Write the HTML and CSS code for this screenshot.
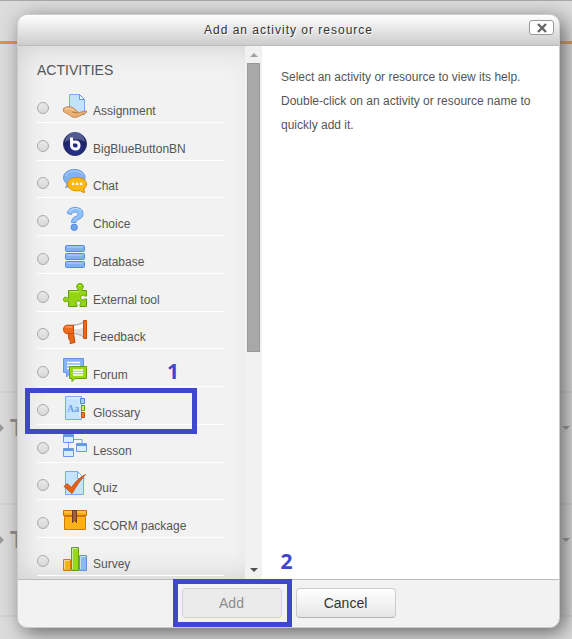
FILE: index.html
```html
<!DOCTYPE html>
<html lang="en">
<head>
<meta charset="utf-8">
<title>Add an activity or resource</title>
<link rel="stylesheet" href="styles.css">
</head>
<body>
<div class="page" aria-hidden="true">
  <div class="page-head"></div>
  <div class="page-gap"></div>
  <div class="topic"><span class="move"></span><span class="topic-name">T</span><span class="caret"></span></div>
  <div class="topic"><span class="move"></span><span class="topic-name">T</span><span class="caret"></span></div>
  <div class="topic"></div>
</div>

<form class="dialog" role="dialog" aria-labelledby="title">
  <header class="dialog-head">
    <h1 id="title">Add an activity or resource</h1>
    <button class="close" type="button" aria-label="Close"><svg width="10" height="10" viewBox="0 0 10 10"><path d="M1 1l8 8M9 1l-8 8" stroke="#666" stroke-width="2.4"/></svg></button>
  </header>
  <div class="dialog-body">
    <div class="chooser">
      <div class="options">
        <h2>ACTIVITIES</h2>
        <ul>
          <li><label><input type="radio" name="m">
            <svg viewBox="0 0 24 24"><path d="M6.500.500h10l5 5v15h-15z" fill="#c3e3fa" stroke="#7aabf3"/><path d="M16.500.500v5h5z" fill="#eef8ff" stroke="#6598e8"/><path d="M.500 14.500c3-2 6-2.500 9-1l4 3c2 1 1 2-1 2l-3-.500 4 1 9.500-2c2 0 1 1.500-.500 2l-8 4c-3 1-6 0-8-2l-6-3.500z" fill="#e9b277" stroke="#b9743b" stroke-width=".8"/><path d="M2 15.300c3-1.500 6-1 9 1.200" stroke="#ffdcae" fill="none"/></svg>
            <span>Assignment</span></label></li>
          <li><label><input type="radio" name="m">
            <svg viewBox="0 0 24 24"><defs><radialGradient id="bb" cx=".5" cy=".75"><stop stop-color="#26339a"/><stop offset="1" stop-color="#1d2465"/></radialGradient></defs><circle cx="12" cy="12" r="11.500" fill="url(#bb)" stroke="#30386d"/><path d="M2 10a10 10 0 0 1 20 0c-7-4-13-3-20 0z" fill="#7480ae" opacity=".6"/><path d="M8.500 5.500v8a3.500 3.500 0 0 0 3.500 3.500h1a3 3 0 0 0 3-3v-1a3 3 0 0 0-3-3H8.500" fill="none" stroke="#fff" stroke-width="2.900"/></svg>
            <span>BigBlueButtonBN</span></label></li>
          <li><label><input type="radio" name="m">
            <svg viewBox="0 0 24 24"><path d="M11.500.500c6 0 10.500 3.500 10.500 8s-4.500 8-10.500 8c-2 0-3 0-4.500-.700-1 1.500-2.500 2.500-4.500 2.700 1-1 1.500-2.500 1.300-4C1.700 13 .500 11 .500 8.500c0-4.500 5-8 11-8z" fill="#81b2f5" stroke="#6793dd"/><path d="M2.500 7c2-6 14-7 18-1" fill="none" stroke="#b5d5ff"/><path d="M14 8.500c5.500 0 9.500 2.800 9.500 6.500 0 2-1 3.500-2.500 4.700 0 1.500.200 2.800.700 3.800-2 0-3.500-1-4.500-2-1 .200-2 .300-3.200.300-5.500 0-9.500-3-9.500-6.800s4-6.500 9.500-6.500z" fill="#ffb90f" stroke="#dd880e"/><path d="M9 13.700h2.300v2.300H9zm4 0h2.300v2.300H13zm4 0h2.300v2.300H17z" fill="#fff"/></svg>
            <span>Chat</span></label></li>
          <li><label><input type="radio" name="m">
            <svg viewBox="0 0 24 24"><path d="M4.500 6.500C4.500 2.500 8 .500 12 .500c5 0 8 2.500 8 6s-2 5-4.500 6c-1.500.700-2 1.500-2.500 3H8.500c0-3 1.500-5 4-6 1.700-.700 2.500-1.200 2.500-2.500 0-1-1-2-3-2s-3 1-3.500 2.500z" fill="#8fc1fb" stroke="#6397e7"/><path d="M6 5c2-4 9-5 12-1" fill="none" stroke="#c3e1ff"/><circle cx="11.200" cy="20.300" r="3.200" fill="#6da4f0" stroke="#568ce0"/></svg>
            <span>Choice</span></label></li>
          <li><label><input type="radio" name="m">
            <svg viewBox="0 0 24 24"><g fill="#7fb0f3" stroke="#5689dd"><rect x="2.500" y=".500" width="19" height="6" rx="1"/><rect x="2.500" y="8.500" width="19" height="6" rx="1"/><rect x="2.500" y="16.500" width="19" height="6" rx="1"/></g><path d="M4 2h16M4 10h16M4 18h16" stroke="#b8d7ff"/></svg>
            <span>Database</span></label></li>
          <li><label><input type="radio" name="m">
            <svg viewBox="0 0 24 24"><path d="M5.500 7.500h9.500V6c-2-1-1.800-5.500 2-5.500s4 4.500 2 5.500v1.500h4.500V13h-1.800c-1.500-1.500-4-1-4 1.500s2.500 3 4 1.500h1.800v7.500H17v-2c1.500-1.500 1-3.500-1.500-3.500s-3 2-1.500 3.500v2H5.500V18H4c-1 1.500-3.500 1-3.500-1.500S3 13.500 4 15h1.500z" fill="#93d514" stroke="#629d0f"/><path d="M6.500 8.700h9.500M16 3c0-1 1.500-1 2 0" stroke="#cdf660" fill="none"/></svg>
            <span>External tool</span></label></li>
          <li><label><input type="radio" name="m">
            <svg viewBox="0 0 24 24"><path d="M5 13h5.500l1.500 9.500-5 1c.500-1.500.500-2.500-1-4z" fill="#e96419" stroke="#bd4b10"/><path d="M10 5c4 0 8-1.500 11-3.500v16C18 15 14 13.500 10 13.500z" fill="#ddd" stroke="#aaa"/><path d="M11 6c4 0 7-1 9-2v4c-4 1-6 1-9 1z" fill="#fff"/><path d="M10.500 5.200v8.300H4c-2 0-3.500-1.500-3.500-4.100S2 5.200 4 5.200zM20.500.500h3v18h-3z" fill="#ee6a1d" stroke="#c24c0f"/><path d="M2.500 7h7" stroke="#ffb077"/></svg>
            <span>Feedback</span></label></li>
          <li><label><input type="radio" name="m">
            <svg viewBox="0 0 24 24"><path d="M.500.500h20v14h-13l-4 4.500v-4.500h-3z" fill="#84b4f5" stroke="#6495e2"/><path d="M4 4.500h13M4 7.500h13M4 10.500h5" stroke="#fff" stroke-width="1.300"/><path d="M6.500 8.500h17v12H12l-3 3v-3H6.500z" fill="#9bd90f" stroke="#62a010"/><path d="M10 12h10M10 14.500h10M10 17h10" stroke="#fff" stroke-width="1.300"/></svg>
            <span>Forum</span></label></li>
          <li class="marked"><label><input type="radio" name="m">
            <svg viewBox="0 0 24 24"><path d="M2.500.500h16v23h-16z" fill="#c3e4fa" stroke="#79aaf0"/><path d="M4 2h13v20" fill="none" stroke="#e5f5ff"/><text x="4" y="16" class="aa">Aa</text><path d="M17.500 2.500h4v5h-4z" fill="#a9cfff" stroke="#5289df"/><path d="M18.500 9.500h3v5h-3z" fill="#c9f080" stroke="#62a010"/><path d="M18.500 16.500h3v5h-3z" fill="#f47c37" stroke="#c24a0d"/></svg>
            <span>Glossary</span></label><i class="note-box"></i><b class="note-num">1</b></li>
          <li><label><input type="radio" name="m">
            <svg viewBox="0 0 24 24"><path d="M10 5.500h9V11M5.500 9v6" fill="none" stroke="#75a7ef"/><g fill="#d6efff" stroke="#679ae6"><path d="M.500.500h10v8H.500zM13.500 9.500h10v8h-10zM.500 14.500h10v8H.500z"/></g><path d="M1 2h9M14 11h9M1 16h9" stroke="#6598e8" stroke-width="2"/></svg>
            <span>Lesson</span></label></li>
          <li><label><input type="radio" name="m">
            <svg viewBox="0 0 24 24"><path d="M2.500.500h12l6 6v17h-18z" fill="#c3e4fa" stroke="#79aaf0"/><path d="M14.500.500v7h7z" fill="#edf8ff" stroke="#79aaf0"/><path d="M1 15.500l3-3 4.500 4C12 11 16.500 6.500 22.500 3.500 17 9.500 13.500 15 9 22.500z" fill="#ea5f18" stroke="#b9460f" stroke-width=".8"/></svg>
            <span>Quiz</span></label></li>
          <li><label><input type="radio" name="m">
            <svg viewBox="0 0 24 24"><path d="M1.500 7.500h21v13h-21z" fill="#fcb116" stroke="#cf7a0c"/><path d="M.500 1.500h23v5H.500z" fill="#fbad10" stroke="#c66f0c"/><path d="M1.500 3h21" stroke="#ffdc67"/><path d="M9.500 1.500h4v12l-2-2-2 2z" fill="#a5612c" stroke="#70401d"/></svg>
            <span>SCORM package</span></label></li>
          <li><label><input type="radio" name="m">
            <svg viewBox="0 0 24 24"><path d="M.500 12.500h7v11h-7z" fill="#fcb116" stroke="#cf7a0c"/><path d="M16.500 8.500h7v15h-7z" fill="#8bb9f6" stroke="#6291df"/><path d="M8.500.500h7v23h-7z" fill="#97d914" stroke="#62a010"/><path d="M9.500 22V1.500h5M1.500 22v-8.500h5M17.500 22V9.500h5" fill="none" stroke="#fff" opacity=".5"/></svg>
            <span>Survey</span></label></li>
        </ul>
      </div>
      <div class="scrollbar"><i class="up"></i><i class="thumb"></i><i class="down"></i></div>
    </div>
    <p class="help">Select an activity or resource to view its help. Double-click on an activity or resource name to quickly add it.</p>
  </div>
  <footer class="dialog-foot">
    <span class="add-wrap"><button type="submit" disabled>Add</button><i class="note-box"></i><b class="note-num">2</b></span>
    <button type="button">Cancel</button>
  </footer>
</form>
</body>
</html>
```
FILE: styles.css
```css
* { box-sizing: border-box; }

body {
  margin: 0;
  min-height: 100vh;
  display: grid;
  font-family: "Liberation Sans", Arial, sans-serif;
  font-size: 12px;
  color: #555;
  background: #dcdcdc;
}

.page, .dialog { grid-area: 1 / 1; }

/* Course page behind the dialog */
.page { height: 100vh; overflow: hidden; border-top: 1px solid #a9a9a9; }
.page-head { height: 43px; border-bottom: 3px solid #dc924c; }
.page-gap { height: 347px; }
.topic {
  display: flex;
  align-items: flex-start;
  height: 112px;
  padding-top: 24px;
  border-top: 2px solid #d2d2d2;
}
.topic-name { flex: 1; margin-left: 6px; font-size: 24px; font-weight: 700; line-height: 22px; color: #888; }
.move { width: 4px; margin-top: 7px; border: 4px solid transparent; border-left-color: #999; border-right: 0; }
.caret { margin: 9px 2px 0 0; border: 4px solid transparent; border-top-color: #888; border-bottom: 0; }

/* Dialog */
.dialog {
  display: flex;
  flex-direction: column;
  margin: 14px 12px 11px 17px;
  border: 1px solid #ccc;
  border-radius: 10px;
  background: #f2f2f2;
  box-shadow: 5px 5px 20px 0 #666;
}
.dialog-head {
  position: relative;
  height: 31px;
  border-bottom: 1px solid #bbb;
  border-radius: 10px 10px 0 0;
  background: linear-gradient(#fff, #ccc);
}
h1 {
  margin: 0;
  font-size: 12px;
  font-weight: 400;
  line-height: 30px;
  letter-spacing: 1px;
  text-align: center;
  color: #333;
  text-shadow: 1px 1px 1px #fff;
}
.close {
  position: absolute;
  top: 5px;
  right: 5px;
  display: grid;
  place-items: center;
  width: 25px;
  height: 15px;
  padding: 0;
  border: 1px solid #999;
  border-radius: 3px;
  background: #fff;
}

.dialog-body { flex: 1; display: flex; background: #fff; }
.chooser { display: flex; width: 244px; background: #f2f2f2; box-shadow: inset 0 0 30px 0 #ccc; }
.options {
  flex: 1;
  display: flex;
  flex-direction: column;
  padding: 14px 21px 3px 19px;
}
h2 { margin: 0; font-size: 14px; font-weight: 400; line-height: 20px; }
ul {
  flex: 1;
  display: grid;
  grid-auto-rows: 1fr;
  margin: 5px 0 0;
  padding: 0;
  list-style: none;
}
li { position: relative; border-bottom: 1px solid #fff; }
label { display: flex; align-items: flex-end; height: 100%; padding-bottom: 4px; }
label svg { width: 24px; height: 24px; margin: 0 6px 0 14px; }
label span { line-height: 14px; }
.aa { font: bold 10px "Liberation Serif", serif; fill: #6e9fe3; }
input {
  appearance: none;
  width: 12px;
  height: 12px;
  margin: 0 0 4px;
  border: 1px solid #aaa;
  border-radius: 50%;
  background: linear-gradient(#e8e8e8, #d8d8d8);
}

.scrollbar {
  display: flex;
  flex-direction: column;
  align-items: center;
  width: 17px;
  padding: 7px 0;
  background: #f1f1f1;
}
.up { border: 4px solid transparent; border-top: 0; border-bottom-color: #a3a3a3; }
.thumb { width: 13px; height: 289px; margin: 6px 0 auto; border: 1px solid #999; background: #a8a8a8; }
.down { border: 4px solid transparent; border-bottom: 0; border-top-color: #505050; }

.help { flex: 1; margin: 0; padding: 19px; line-height: 24px; }

.dialog-foot {
  display: flex;
  justify-content: center;
  gap: 14px;
  height: 48px;
  padding-top: 8px;
  border-top: 1px solid #bbb;
}
.add-wrap { position: relative; }
.dialog-foot button {
  width: 100px;
  height: 30px;
  padding: 0;
  border: 1px solid #ccc;
  border-bottom-color: #b3b3b3;
  border-radius: 4px;
  font: 14px "Liberation Sans", Arial, sans-serif;
  color: #333;
  background: linear-gradient(#fff, #e6e6e6);
}
.dialog-foot button:disabled { color: #8b8b8b; background: #ebebeb; border-color: #d3d3d3; }

/* Numbered callouts */
.note-box { position: absolute; border: 5px solid #3f48cc; pointer-events: none; }
.marked { z-index: 1; }
.marked .note-box { top: 1px; left: -12px; width: 172px; height: 46px; }
.add-wrap .note-box { top: -9px; left: -9px; width: 119px; height: 48px; }
.note-num {
  position: absolute;
  font: bold 21px/24px "Open Sans", sans-serif;
  color: #3f48cc;
}
.marked .note-num { top: -28px; left: 130px; }
.add-wrap .note-num { top: -39px; left: 99px; }
```
